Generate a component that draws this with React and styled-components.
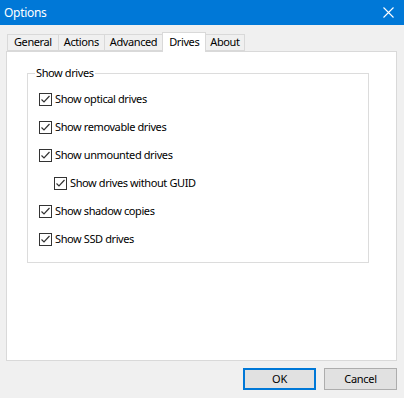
import React from "react";
import styled, { createGlobalStyle } from "styled-components";

const Global = createGlobalStyle`
  html, body { margin: 0; padding: 0; background: #f0f0f0; }
  * { box-sizing: border-box; }
`;

const Window = styled.div`
  width: 404px;
  height: 398px;
  display: flex;
  flex-direction: column;
  background: #f0f0f0;
  font-family: "Noto Sans", "Liberation Sans", sans-serif;
  font-size: 11px;
  letter-spacing: -0.4px;
  color: #000;
  overflow: hidden;
`;

const TitleBar = styled.div`
  height: 25px;
  flex: none;
  background: #0078d7;
  color: #fff;
  display: flex;
  align-items: center;
  justify-content: space-between;
  padding: 0 10px 0 4px;
`;

const Title = styled.span`
  font-size: 12px;
  letter-spacing: -0.3px;
  line-height: 16px;
`;

const Body = styled.div`
  flex: 1;
  display: flex;
  flex-direction: column;
  padding: 7px 7px 8px 6px;
`;

const TabStrip = styled.div`
  display: flex;
  align-items: flex-end;
  height: 19px;
  padding-left: 1px;
  position: relative;
  z-index: 1;
`;

const Tab = styled.div`
  height: ${(p) => (p.$active ? "20px" : "17px")};
  padding: 0 ${(p) => p.$pad}px 1px ${(p) => p.$pad}px;
  margin-left: ${(p) => (p.$first ? 0 : -1)}px;
  border: 1px solid #d9d9d9;
  border-bottom: ${(p) => (p.$active ? "none" : "1px solid #d9d9d9")};
  background: ${(p) => (p.$active ? "#fff" : "#f0f0f0")};
  display: flex;
  align-items: center;
  line-height: 16px;
  white-space: nowrap;
  margin-bottom: ${(p) => (p.$active ? "-1px" : "0")};
  position: relative;
  z-index: ${(p) => (p.$active ? 2 : 1)};
`;

const Panel = styled.div`
  height: 310px;
  flex: none;
  background: #fff;
  border: 1px solid #d9d9d9;
  padding: 13px 27px 0 20px;
`;

const Group = styled.fieldset`
  margin: 0;
  border: 1px solid #dcdcdc;
  padding: 4px 0 9px 11px;
  width: 342px;
  min-width: 0;
`;

const Legend = styled.legend`
  padding: 0 1px;
  margin-left: -4px;
  line-height: 16px;
`;

const Row = styled.label`
  display: flex;
  align-items: center;
  height: 28px;
  padding-left: ${(p) => (p.$indent ? 15 : 0)}px;
  line-height: 16px;
  white-space: nowrap;
`;

const Box = styled.span`
  width: 13px;
  height: 13px;
  border: 1px solid #333;
  background: #fff;
  display: inline-flex;
  align-items: center;
  justify-content: center;
  margin-right: 3px;
  flex: none;
`;

const Footer = styled.div`
  display: flex;
  justify-content: flex-end;
  gap: 8px;
  margin-top: 7px;
`;

const Button = styled.button`
  width: 73px;
  height: 22px;
  font-family: inherit;
  font-size: 11px;
  letter-spacing: -0.3px;
  color: #000;
  background: #e1e1e1;
  border: ${(p) => (p.$default ? "2px solid #0078d7" : "1px solid #adadad")};
  padding: 0;
  margin: 0;
  line-height: 16px;
`;

const Check = () => (
  <Box>
    <svg width="11" height="11" viewBox="0 0 11 11">
      <path d="M1.5 5.5 L4 8 L9.5 2" fill="none" stroke="#333" strokeWidth="1.2" />
    </svg>
  </Box>
);

const CloseIcon = () => (
  <svg width="11" height="11" viewBox="0 0 11 11">
    <path d="M0.5 0.5 L10.5 10.5 M10.5 0.5 L0.5 10.5" stroke="#fff" strokeWidth="1.1" />
  </svg>
);

const tabs = [
  { label: "General", pad: 6 },
  { label: "Actions", pad: 5 },
  { label: "Advanced", pad: 5 },
  { label: "Drives", pad: 6, active: true },
  { label: "About", pad: 4 },
];

const options = [
  { label: "Show optical drives" },
  { label: "Show removable drives" },
  { label: "Show unmounted drives" },
  { label: "Show drives without GUID", indent: true },
  { label: "Show shadow copies" },
  { label: "Show SSD drives" },
];

export default function App() {
  return (
    <>
      <Global />
      <Window>
        <TitleBar>
          <Title>Options</Title>
          <CloseIcon />
        </TitleBar>
        <Body>
          <TabStrip>
            {tabs.map((t, i) => (
              <Tab key={t.label} $active={t.active} $first={i === 0} $pad={t.pad}>
                {t.label}
              </Tab>
            ))}
          </TabStrip>
          <Panel>
            <Group>
              <Legend>Show drives</Legend>
              {options.map((o) => (
                <Row key={o.label} $indent={o.indent}>
                  <Check />
                  {o.label}
                </Row>
              ))}
            </Group>
          </Panel>
          <Footer>
            <Button $default>OK</Button>
            <Button>Cancel</Button>
          </Footer>
        </Body>
      </Window>
    </>
  );
}
